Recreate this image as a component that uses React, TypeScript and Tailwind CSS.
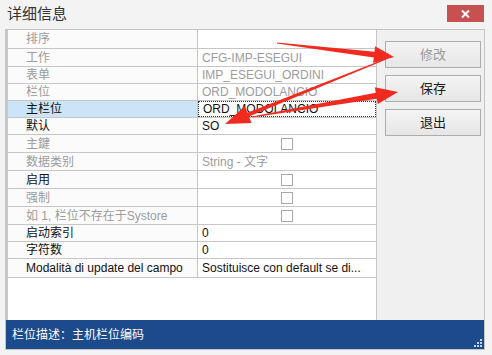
const font = { fontFamily: '"Liberation Sans", "Noto Sans CJK SC", sans-serif' }

type Row = { label: string; on?: boolean; value?: string; valueOn?: boolean; check?: boolean; focus?: boolean; h: string }

const rows: Row[] = [
  { label: '排序', value: '', h: 'h-[19px]' },
  { label: '工作', value: 'CFG-IMP-ESEGUI', h: 'h-[18px]' },
  { label: '表单', value: 'IMP_ESEGUI_ORDINI', h: 'h-[17px]' },
  { label: '栏位', value: 'ORD_MODOLANCIO', h: 'h-[17px]' },
  { label: '主栏位', on: true, value: 'ORD_MODOLANCIO', valueOn: true, focus: true, h: 'h-[17px]' },
  { label: '默认', on: true, value: 'SO', valueOn: true, h: 'h-[17px]' },
  { label: '主鍵', check: true, h: 'h-[18px]' },
  { label: '数据类别', value: 'String - 文字', h: 'h-[18px]' },
  { label: '启用', on: true, check: true, h: 'h-[18px]' },
  { label: '强制', check: true, h: 'h-[18px]' },
  { label: '如 1, 栏位不存在于Systore', check: true, h: 'h-[18px]' },
  { label: '启动索引', on: true, value: '0', valueOn: true, h: 'h-[17px]' },
  { label: '字符数', on: true, value: '0', valueOn: true, h: 'h-[17px]' },
  { label: 'Modalità di update del campo', on: true, value: 'Sostituisce con default se di...', valueOn: true, h: 'h-[19px]' },
]

function arrowPts(x1: number, y1: number, x2: number, y2: number, w1: number, w2: number, hl: number, hw: number) {
  const len = Math.hypot(x2 - x1, y2 - y1)
  const dx = (x2 - x1) / len
  const dy = (y2 - y1) / len
  const nx = -dy
  const ny = dx
  const bx = x2 - dx * hl
  const by = y2 - dy * hl
  const p = [
    [x1 + (nx * w1) / 2, y1 + (ny * w1) / 2],
    [bx + (nx * w2) / 2, by + (ny * w2) / 2],
    [bx + (nx * hw) / 2, by + (ny * hw) / 2],
    [x2, y2],
    [bx - (nx * hw) / 2, by - (ny * hw) / 2],
    [bx - (nx * w2) / 2, by - (ny * w2) / 2],
    [x1 - (nx * w1) / 2, y1 - (ny * w1) / 2],
  ]
  return p.map((q) => q.join(',')).join(' ')
}

function Btn({ label, disabled }: { label: string; disabled?: boolean }) {
  return (
    <button
      className={`h-[27px] w-[96px] border border-[#adadad] bg-gradient-to-b from-[#f4f4f4] to-[#e6e6e6] text-[13px] ${
        disabled ? 'text-[#9a9a9a]' : 'text-[#1a1a1a]'
      }`}
    >
      {label}
    </button>
  )
}

export default function App() {
  return (
    <div className="relative h-[355px] w-[492px] overflow-hidden bg-[#f3f3f3]" style={font}>
      <div className="flex h-[29px] items-center justify-between pl-[7px] pr-[8px]">
        <span className="text-[15px] text-[#333]">详细信息</span>
        <div className="mb-[2px] flex h-[17px] w-[37px] items-center justify-center bg-[#c75050]">
          <svg width="9" height="8" viewBox="0 0 9 8">
            <path d="M1 0.5 L8 7.5 M8 0.5 L1 7.5" stroke="white" strokeWidth="2" />
          </svg>
        </div>
      </div>

      <div className="ml-[5px] w-[480px] border border-[#c4c4c4]">
        <div className="flex h-[290px]">
          <div className="w-[370px] border-l-2 border-[#c8c8c8] bg-white">
            {rows.map((r, i) => (
              <div key={i} className={`flex border-b border-[#c6c6c6] text-[12px] ${r.h}`}>
                <div
                  className={`flex w-[190px] items-center border-r border-[#c6c6c6] pl-[18px] ${
                    r.focus ? 'bg-[#cce4f7]' : 'bg-[#fbfbfb]'
                  } ${r.on ? 'text-[#111]' : 'text-[#9c9c9c]'}`}
                >
                  {r.label}
                </div>
                <div
                  className={`flex flex-1 items-center pl-[4px] ${r.valueOn ? 'text-[#111]' : 'text-[#9c9c9c]'} ${
                    r.focus ? 'border border-dotted border-[#333]' : ''
                  }`}
                >
                  {r.check ? (
                    <div className="mx-auto h-[12px] w-[12px] -translate-x-[2px] border border-[#a8a8a8] bg-white" />
                  ) : (
                    r.value
                  )}
                </div>
              </div>
            ))}
          </div>
          <div className="flex flex-1 flex-col gap-[7px] border-l border-[#c4c4c4] bg-[#f0f0f0] pl-[8px] pt-[11px]">
            <Btn label="修改" disabled />
            <Btn label="保存" />
            <Btn label="退出" />
          </div>
        </div>
        <div className="relative flex h-[29px] items-center bg-[#1c4a8b] pl-[6px] text-[12px] text-white">
          栏位描述：主机栏位编码
          <svg className="absolute bottom-[2px] right-[2px]" width="8" height="8" viewBox="0 0 8 8">
            <rect x="6" y="0" width="2" height="2" fill="#c8d4e6" />
            <rect x="3" y="3" width="2" height="2" fill="#c8d4e6" />
            <rect x="6" y="3" width="2" height="2" fill="#c8d4e6" />
            <rect x="0" y="6" width="2" height="2" fill="#c8d4e6" />
            <rect x="3" y="6" width="2" height="2" fill="#c8d4e6" />
            <rect x="6" y="6" width="2" height="2" fill="#c8d4e6" />
          </svg>
        </div>
      </div>

      <svg className="pointer-events-none absolute left-0 top-0" width="492" height="355">
        <polygon points={arrowPts(277, 43, 394, 57, 1, 6, 20, 17)} fill="#f2291e" />
        <polygon points={arrowPts(386, 59, 225, 124, 1.2, 4, 25, 18)} fill="#f2291e" />
        <polygon points={arrowPts(252, 117, 398, 92, 1.2, 6, 22, 17)} fill="#f2291e" />
      </svg>
    </div>
  )
}
